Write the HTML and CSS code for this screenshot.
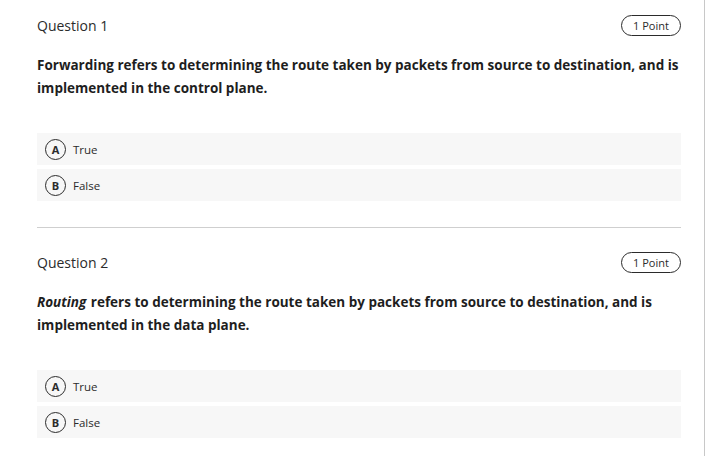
FILE: index.html
```html
<!DOCTYPE html>
<html>
<head>
<meta charset="utf-8">
<link rel="stylesheet" href="styles.css">
</head>
<body>
<div class="page">
  <div class="quiz">
    <section class="question">
      <div class="q-head">
        <span class="q-title">Question 1</span>
        <span class="points">1 Point</span>
      </div>
      <p class="q-text">Forwarding refers to determining the route taken by packets from source to destination, and is implemented in the control plane.</p>
      <div class="options">
        <div class="option"><span class="letter">A</span><span class="label">True</span></div>
        <div class="option"><span class="letter">B</span><span class="label">False</span></div>
      </div>
    </section>
    <hr class="divider">
    <section class="question">
      <div class="q-head">
        <span class="q-title">Question 2</span>
        <span class="points">1 Point</span>
      </div>
      <p class="q-text"><em>Routing</em> refers to determining the route taken by packets from source to destination, and is implemented in the data plane.</p>
      <div class="options">
        <div class="option"><span class="letter">A</span><span class="label">True</span></div>
        <div class="option"><span class="letter">B</span><span class="label">False</span></div>
      </div>
    </section>
  </div>
  <div class="scrollbar"></div>
</div>
</body>
</html>
```

FILE: styles.css
```css
html, body {
  margin: 0;
  padding: 0;
  background: #ffffff;
}
body {
  font-family: "Open Sans", "Noto Sans", sans-serif;
  color: #252525;
}
.page {
  display: flex;
  width: 714px;
  height: 456px;
  overflow: hidden;
}
.quiz {
  width: 644px;
  padding: 14px 0 0 37px;
}
.scrollbar {
  margin-left: 23px;
  width: 1px;
  background: #c8c8c8;
  height: 456px;
}
.question {
  display: flex;
  flex-direction: column;
}
.q-head {
  display: flex;
  justify-content: space-between;
  align-items: center;
  height: 22px;
}
.q-title {
  font-size: 14px;
  color: #2b2b2b;
}
.points {
  box-sizing: border-box;
  flex-shrink: 0;
  height: 21px;
  width: 60px;
  border: 1px solid #2b2b2b;
  border-radius: 11px;
  font-size: 11px;
  display: flex;
  align-items: center;
  justify-content: center;
  color: #2b2b2b;
}
.q-text {
  margin: 18px 0 0 0;
  font-size: 13.5px;
  line-height: 23px;
  font-weight: 700;
  color: #1e1e1e;
}
.q-text em {
  font-style: italic;
  padding-right: 1px;
}
.options {
  margin-top: 33px;
  display: flex;
  flex-direction: column;
  gap: 4px;
}
.option {
  height: 32px;
  background: #f7f7f7;
  display: flex;
  align-items: center;
  padding-left: 8px;
}
.letter {
  box-sizing: border-box;
  flex-shrink: 0;
  width: 21px;
  height: 21px;
  border: 1.5px solid #2b2b2b;
  border-radius: 50%;
  font-size: 11px;
  font-weight: 700;
  display: flex;
  align-items: center;
  justify-content: center;
  color: #2b2b2b;
}
.label {
  margin-left: 7px;
  font-size: 11.5px;
  color: #2b2b2b;
}
.divider {
  margin: 26px 0 23px 0;
  border: 0;
  height: 1px;
  background: #cfcfcf;
}
```
